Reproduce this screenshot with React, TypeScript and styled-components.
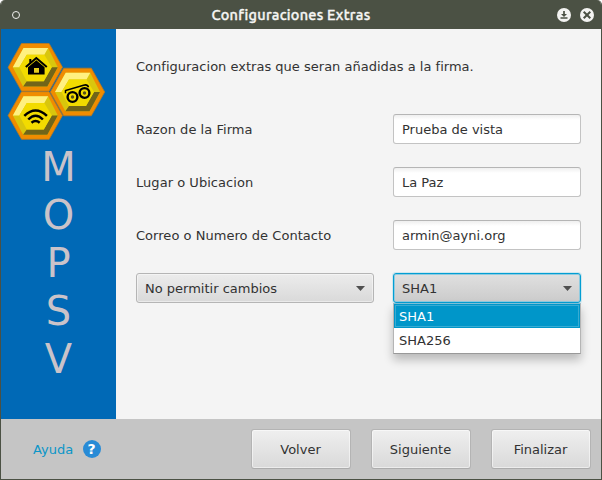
import React from "react";
import styled, { createGlobalStyle, css } from "styled-components";

const GlobalStyle = createGlobalStyle`
  * { box-sizing: border-box; }
  html, body { margin: 0; padding: 0; background: #fff; }
  body { font-family: "DejaVu Sans", Verdana, sans-serif; font-size: 13px; color: #323232; }
`;

const Window = styled.main`
  width: 602px;
  height: 480px;
  display: flex;
  flex-direction: column;
  border: 1px solid #4b5144;
  border-top: 0;
  border-radius: 5px 5px 0 0;
  overflow: hidden;
  background: #f4f4f4;
`;

const TitleBar = styled.header`
  flex: 0 0 29px;
  display: grid;
  grid-template-columns: 46px 1fr 60px;
  align-items: center;
  padding: 0 7px 0 11px;
  background: #4b5144;
`;

const Title = styled.h1`
  margin: 0;
  padding-right: 10px;
  text-align: center;
  font: 500 14.5px/28px Ubuntu, "Noto Sans", sans-serif;
  letter-spacing: 0.25px;
  -webkit-text-stroke: 0.35px #f6f6f4;
  color: #f6f6f4;
  white-space: nowrap;
`;

const WindowControls = styled.div`
  display: flex;
  justify-content: flex-end;
  gap: 9px;
  svg { display: block; }
`;

const MenuDot = styled.span`
  width: 8px;
  height: 8px;
  border: 1.5px solid #f0f0ee;
  border-radius: 50%;
`;

const Body = styled.div`
  flex: 0 0 390px;
  display: flex;
`;

const Sidebar = styled.aside`
  width: 115px;
  background: #0069b6;
  svg { display: block; }
`;

const BrandLetters = styled.div`
  display: flex;
  flex-direction: column;
  align-items: center;
  font-size: 40px;
  line-height: 48px;
  color: #cac3c9;
`;

const Content = styled.section`
  flex: 1;
  padding: 28px 20px 0;
`;

const Intro = styled.p`
  margin: 0;
  height: 57px;
  line-height: 20px;
  letter-spacing: 0.01px;
`;

const Form = styled.form`
  display: grid;
  grid-template-columns: 238px 188px;
  grid-auto-rows: 30px;
  column-gap: 19px;
  row-gap: 23px;
  align-items: center;
`;

const Label = styled.label`
  padding-top: 2px;
  line-height: 30px;
  letter-spacing: 0.04px;
`;

const TextField = styled.input`
  width: 188px;
  height: 30px;
  padding: 0 8px;
  border: 1px solid #c3c3c3;
  border-top-color: #b5b5b5;
  border-radius: 3px;
  outline: 0;
  background: linear-gradient(#efefef, #fff 5px);
  font: inherit;
  color: inherit;
`;

const ComboWrap = styled.div`
  position: relative;
`;

const Combo = styled.button<{ $open?: boolean }>`
  display: flex;
  width: 100%;
  height: 30px;
  align-items: center;
  justify-content: space-between;
  padding: 0 8px;
  border: 1px solid #b5b5b5;
  border-radius: 3px;
  background: linear-gradient(#ececec, #d9d9d9);
  box-shadow: inset 0 0 0 1px rgba(255, 255, 255, 0.45);
  font: inherit;
  color: inherit;
  ${(p) =>
    p.$open &&
    css`
      border-color: #039ed3;
      background: linear-gradient(#e0e0e0, #cbcbcb);
      box-shadow: inset 0 0 0 1px #8fcbe0, 0 0 0 1px rgba(3, 158, 211, 0.15);
    `}
`;

const Popup = styled.ul`
  position: absolute;
  top: 30px;
  left: 0;
  width: 188px;
  height: 51px;
  margin: 0;
  padding: 0;
  list-style: none;
  border: 1px solid #b5b5b5;
  border-top-color: #7ebfd6;
  border-bottom-color: #999;
  background: #fff;
  box-shadow: 0 6px 9px rgba(0, 0, 0, 0.24);
`;

const Option = styled.li<{ $selected?: boolean }>`
  height: 24px;
  padding: 1px 0 0 5px;
  line-height: 24px;
  ${(p) =>
    p.$selected &&
    css`
      background: #0096c9;
      box-shadow: inset 0 0 0 1px #0096c9, inset 0 0 0 2px #38abd3;
      color: #fff;
    `}
`;

const Footer = styled.footer`
  flex: 0 0 60px;
  display: flex;
  align-items: center;
  justify-content: space-between;
  padding: 0 10px 0 32px;
  background: #c5c5c5;
`;

const Help = styled.a`
  display: flex;
  align-items: center;
  gap: 9.5px;
  color: #0b96c8;
`;

const Buttons = styled.div`
  display: flex;
  gap: 20px;
`;

const Button = styled.button`
  width: 100px;
  height: 40px;
  padding: 0 1px 0 0;
  border: 1px solid #b4b4b4;
  border-bottom-color: #acacac;
  border-radius: 3px;
  background: linear-gradient(#efefef, #d9d9d9);
  box-shadow: inset 0 0 0 1px rgba(255, 255, 255, 0.5);
  font: inherit;
  color: inherit;
`;

const HelpBadge = styled.span`
  display: grid;
  place-items: center;
  width: 18px;
  height: 18px;
  border-radius: 50%;
  background: #288bd6;
  font-size: 14px;
  font-weight: 700;
  line-height: 18px;
  color: #fff;
`;

function Hexagon({ x, y, children }: { x: number; y: number; children: React.ReactNode }) {
  return (
    <g transform={`translate(${x} ${y})`}>
      <path d="M-27.2 0L-13.8-23.8H13.8L27.2 0L13.8 23.8H-13.8Z" fill="#f08c00" stroke="#b77722" strokeWidth=".8" />
      <path d="M-22.5 0L-11.8-19.3H12.8L22.5 0L12 19.3H-12.2Z" fill="#d9c60d" />
      <path d="M-22.5 0L-11.8-19.3H12.8L9-12.5H-8.5L-16 0Z" fill="#fff080" />
      <path d="M22.5 0L12 19.3H-12.2L-8.5 14H8.5L16.5 0Z" fill="#716519" />
      <path d="M-16 0L-8.5-12.5H9L16.5 0L8.5 14H-8.5Z" fill="#f2db00" />
      {children}
    </g>
  );
}

function Logo() {
  return (
    <svg width="115" height="114" viewBox="1 29 115 114">
      <Hexagon x={35.3} y={67.3}>
        <path d="M-7.3 0V7.3H9.3V0L1-7Z" />
        <path d="M-9.5-.3L1-9.3L11.5-.3M-5-4V-8.3" fill="none" stroke="#000" strokeWidth="2" />
        <path d="M-1.3 .7H3.7V5.5H-1.3Z" fill="#e4cd20" />
      </Hexagon>
      <Hexagon x={35.3} y={115.5}>
        <path d="M-11 .4Q.3-10.5 11.6 .4M-7 4Q.3-3.7 7.6 4M-3.8 7.3Q.3 3.6 4.4 7.3" fill="none" stroke="#000" strokeWidth="2.5" />
      </Hexagon>
      <Hexagon x={77.5} y={92}>
        <g fill="none" stroke="#000">
          <circle cx="-5" cy="5" r="4.9" strokeWidth="2.4" />
          <circle cx="7" cy="1" r="4.9" strokeWidth="2.4" />
          <path d="M-12 1.3V-1.5L6-6.8Q10-8 11-4.8" strokeWidth="1.5" />
        </g>
        <circle cx="-5" cy="5" r="1.7" fill="#555020" />
        <circle cx="7" cy="1" r="1.7" fill="#555020" />
      </Hexagon>
    </svg>
  );
}

const Arrow = () => (
  <svg width="9" height="5" viewBox="0 0 9 5"><path d="M0 0H9L4.5 5Z" fill="#505050" /></svg>
);

const fields = [
  ["razon", "Razon de la Firma", "Prueba de vista"],
  ["lugar", "Lugar o Ubicacion", "La Paz"],
  ["correo", "Correo o Numero de Contacto", "armin@ayni.org"],
];

export default function App() {
  return (
    <>
      <GlobalStyle />
      <Window>
        <TitleBar>
          <MenuDot />
          <Title>Configuraciones Extras</Title>
          <WindowControls>
            <svg width="14" height="14" viewBox="0 0 14 14">
              <circle cx="7" cy="7" r="7" fill="#f3f3f1" />
              <path d="M7 3V7.5M3.5 10H10.5" stroke="#4b5144" strokeWidth="1.7" />
              <path d="M4 6H10L7 9Z" fill="#4b5144" />
            </svg>
            <svg width="14" height="14" viewBox="0 0 14 14">
              <circle cx="7" cy="7" r="7" fill="#f3f3f1" />
              <path d="M3.7 3.7L10.3 10.3M10.3 3.7L3.7 10.3" stroke="#4b5144" strokeWidth="2" />
            </svg>
          </WindowControls>
        </TitleBar>
        <Body>
          <Sidebar>
            <Logo />
            <BrandLetters>
              {"MOPSV".split("").map((c) => <span key={c}>{c}</span>)}
            </BrandLetters>
          </Sidebar>
          <Content>
            <Intro>Configuracion extras que seran añadidas a la firma.</Intro>
            <Form>
              {fields.map(([id, label, value]) => (
                <React.Fragment key={id}>
                  <Label htmlFor={id}>{label}</Label>
                  <TextField id={id} defaultValue={value} />
                </React.Fragment>
              ))}
              <Combo type="button">No permitir cambios<Arrow /></Combo>
              <ComboWrap>
                <Combo type="button" $open>SHA1<Arrow /></Combo>
                <Popup>
                  <Option $selected>SHA1</Option>
                  <Option>SHA256</Option>
                </Popup>
              </ComboWrap>
            </Form>
          </Content>
        </Body>
        <Footer>
          <Help>Ayuda<HelpBadge>?</HelpBadge></Help>
          <Buttons>
            <Button>Volver</Button>
            <Button>Siguiente</Button>
            <Button>Finalizar</Button>
          </Buttons>
        </Footer>
      </Window>
    </>
  );
}
